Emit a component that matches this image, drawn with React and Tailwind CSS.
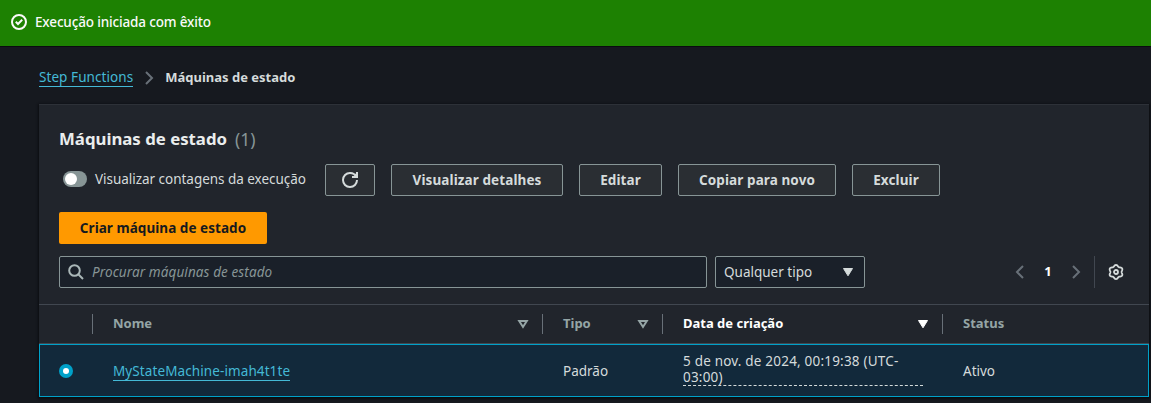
import React from "react";

function Button({ className = "", children }) {
  return (
    <button
      className={`flex h-8 shrink-0 items-center justify-center whitespace-nowrap rounded-[2px] border border-[#879596] bg-[#2a2e33] text-[13.5px] font-bold tracking-[0.1px] text-[#d5dbdb] ${className}`}
    >
      {children}
    </button>
  );
}

function SortIcon({ filled = false }) {
  return (
    <svg viewBox="0 0 16 16" className="h-4 w-4 shrink-0" fill={filled ? "currentColor" : "none"} stroke="currentColor" strokeWidth={filled ? 1 : 2}>
      {filled ? <path d="M3.5 4.5h9L8 11.8z" /> : <path d="M4.2 5h7.6L8 11z" />}
    </svg>
  );
}

function HeaderCell({ className = "", children, last = false }) {
  return (
    <div className={`flex h-full shrink-0 items-center ${className}`}>
      <div className="flex flex-1 items-center justify-between whitespace-nowrap pl-5 pr-[11px] text-[13px] font-bold">
        {children}
      </div>
      {!last && <div className="h-5 w-px bg-[#687078]" />}
    </div>
  );
}

function Chevron({ left = false }) {
  return (
    <svg viewBox="0 0 16 16" className="h-4 w-4 shrink-0" fill="none" stroke="#687078" strokeWidth="2">
      <path d={left ? "M11 2 5 8l6 6" : "M5 2l6 6-6 6"} />
    </svg>
  );
}

// Outline of a gear with six rounded teeth, sampled in polar coordinates.
const gearPoints = Array.from({ length: 72 }, (_, i) => {
  const a = (i * Math.PI) / 36;
  const r = 6.35 + 0.75 * Math.cos(6 * a);
  return `${(8 + r * Math.sin(a)).toFixed(2)},${(8 - r * Math.cos(a)).toFixed(2)}`;
}).join(" ");

export default function App() {
  return (
    <div className="h-[403px] w-full overflow-hidden bg-[#16191f] font-['Noto_Sans',sans-serif] text-[13.5px] text-[#d5dbdb]">
      <div className="flex h-[47px] items-center gap-2 border-b border-[#0a0c10] bg-[#1d8102] pl-[11px] text-[#fafafa]">
        <svg viewBox="0 0 16 16" className="mb-0.5 h-4 w-4" fill="none" stroke="currentColor" strokeWidth="2">
          <circle cx="8" cy="8" r="7" />
          <path d="m4.8 7.8 2.2 2.2 4.2-4.2" />
        </svg>
        <span className="mb-0.5 whitespace-nowrap font-medium tracking-[-0.15px]">Execução iniciada com êxito</span>
      </div>

      <nav className="flex h-[57px] items-center pl-[39px] pt-[5px]">
        <a className="h-[18px] whitespace-nowrap border-b border-[#44b9d6] leading-[16px] tracking-[0.07px] text-[#44b9d6]">Step Functions</a>
        <span className="ml-2 mr-2"><Chevron /></span>
        <span className="whitespace-nowrap text-[13px] font-bold">Máquinas de estado</span>
      </nav>

      <main className="ml-[39px] mr-[2px] flex h-[293px] flex-col border-t border-[#2d3138] bg-[#21252c] shadow-[0_1px_2px_1px_#0b0d11]">
        <div className="px-5 pt-[21px]">
          <h1 className="flex h-[26px] items-center whitespace-nowrap text-[16.8px] font-bold text-[#eaeded]">
            Máquinas de estado
            <span className="ml-2 text-[17.5px] font-normal text-[#879596]">(1)</span>
          </h1>
          <div className="mt-3 flex h-8 items-center">
            <div className="mb-0.5 flex w-[266px] shrink-0 items-center pl-1">
              <span className="flex h-4 w-6 items-center rounded-full bg-[#879596] pl-0.5">
                <span className="h-3 w-3 rounded-full bg-white" />
              </span>
              <span className="ml-2 whitespace-nowrap tracking-[-0.03px]">Visualizar contagens da execução</span>
            </div>
            <div className="flex gap-4">
              <Button className="w-[50px]">
                <svg viewBox="0 0 16 16" className="h-4 w-4" fill="none" stroke="currentColor" strokeWidth="2">
                  <path d="M10 5h5V0" />
                  <path d="M12 2.500 15 5V1z" fill="currentColor" stroke="none" />
                  <path d="M15 8a6.96 6.96 0 0 1-7 7 6.96 6.96 0 0 1-7-7 6.96 6.96 0 0 1 7-7 6.87 6.87 0 0 1 6.3 4" />
                </svg>
              </Button>
              <Button className="w-[172px]">Visualizar detalhes</Button>
              <Button className="w-[83px]">Editar</Button>
              <Button className="w-[158px]">Copiar para novo</Button>
              <Button className="w-[88px]">Excluir</Button>
            </div>
          </div>
          <button className="mt-4 flex h-8 w-[208px] items-center justify-center whitespace-nowrap rounded-[2px] bg-[#ff9900] text-[13.5px] font-bold tracking-[0.05px] text-[#16191f]">
            Criar máquina de estado
          </button>
          <div className="mt-3 flex h-8 items-center">
            <div className="flex h-8 w-[648px] shrink-0 items-center rounded-[2px] border border-[#879596] bg-[#1a2029] pl-2">
              <svg viewBox="0 0 16 16" className="h-4 w-4" fill="none" stroke="#aab7b8" strokeWidth="2">
                <circle cx="6.5" cy="6.5" r="5.3" />
                <path d="m10.5 10.5 4.5 4.5" />
              </svg>
              <span className="ml-2 whitespace-nowrap italic tracking-[0.1px] text-[#879596]">Procurar máquinas de estado</span>
            </div>
            <div className="ml-2 flex h-8 w-[150px] shrink-0 items-center justify-between rounded-[2px] border border-[#879596] bg-[#1a2029] pl-2 pr-2">
              <span className="whitespace-nowrap">Qualquer tipo</span>
              <SortIcon filled />
            </div>
            <div className="ml-auto flex items-center pr-[5px]">
              <Chevron left />
              <span className="w-10 text-center text-[13px] font-bold text-white">1</span>
              <Chevron />
              <span className="ml-2.5 h-8 w-px bg-[#414750]" />
              <svg viewBox="0 0 16 16" className="ml-[13px] h-4 w-4" fill="none" stroke="#d5dbdb" strokeWidth="1.8" strokeLinejoin="round">
                <polygon points={gearPoints} />
                <circle cx="8" cy="8" r="2" />
              </svg>
            </div>
          </div>
        </div>

        <div className="mt-4 flex h-10 border-y border-[#414750] text-[#95a5a6]">
          <HeaderCell className="w-[54px]" />
          <HeaderCell className="w-[450px]">Nome <SortIcon /></HeaderCell>
          <HeaderCell className="w-[120px]">Tipo <SortIcon /></HeaderCell>
          <HeaderCell className="w-[280px] text-white">Data de criação <SortIcon filled /></HeaderCell>
          <HeaderCell className="w-[160px]" last>Status</HeaderCell>
        </div>
        <div className="flex h-[53px] items-center border border-[#00a1c9] bg-[#12293b]">
          <div className="w-[73px] shrink-0 pl-[19px]">
            <span className="flex h-3.5 w-3.5 items-center justify-center rounded-full bg-[#00a1c9]">
              <span className="h-1.5 w-1.5 rounded-full bg-white" />
            </span>
          </div>
          <div className="w-[450px] shrink-0 pt-0.5">
            <a className="inline-block h-[18px] whitespace-nowrap border-b border-[#44b9d6] leading-[16px] tracking-[0.1px] text-[#44b9d6]">MyStateMachine-imah4t1te</a>
          </div>
          <div className="w-[120px] shrink-0 pt-0.5">Padrão</div>
          <div className="mb-0.5 w-[240px] shrink-0 border-b border-dashed border-[#d5dbdb] leading-[16px] tracking-[0.2px]">
            5 de nov. de 2024, 00:19:38 (UTC-<br />03:00)
          </div>
          <div className="pl-10 pt-0.5">Ativo</div>
        </div>
      </main>
    </div>
  );
}
